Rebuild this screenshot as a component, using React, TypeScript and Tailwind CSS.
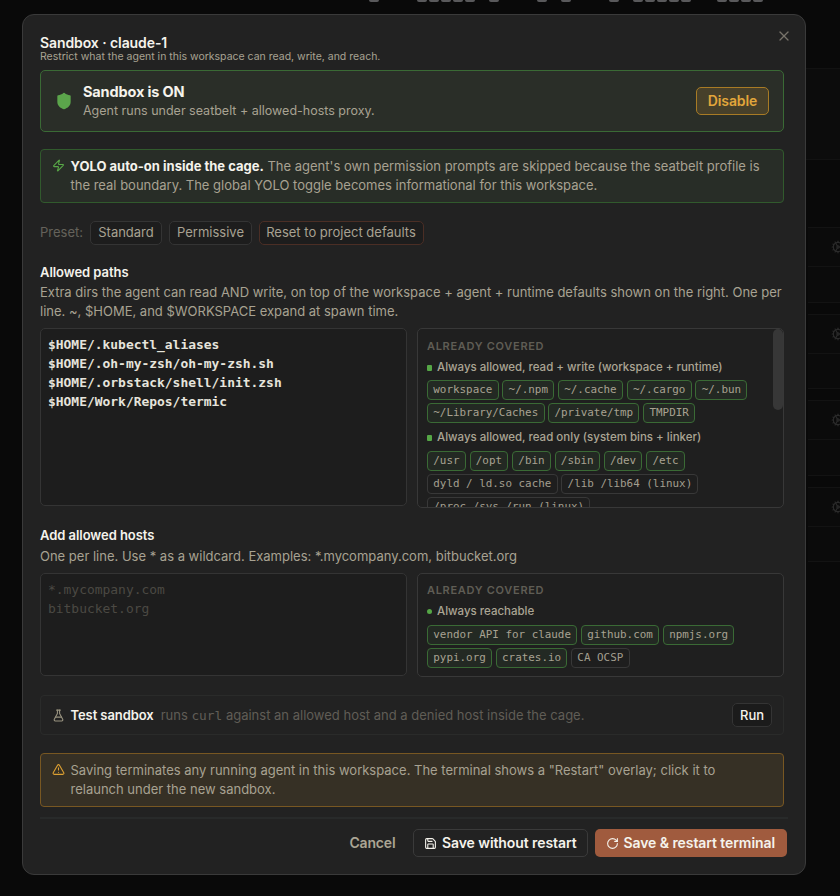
import React from 'react';
import { Cog, FlaskConical, RotateCw, Save, Shield, TriangleAlert, X, Zap } from 'lucide-react';

interface ChipData {
  label: string;
  muted?: boolean;
}

interface ChipGroupProps {
  title: string;
  chips: ChipData[];
  square?: boolean;
}

const WRITE_PATHS: ChipData[] = [
  { label: 'workspace' },
  { label: '~/.npm' },
  { label: '~/.cache' },
  { label: '~/.cargo' },
  { label: '~/.bun' },
  { label: '~/Library/Caches' },
  { label: '/private/tmp' },
  { label: 'TMPDIR' },
];

const READ_PATHS: ChipData[] = [
  { label: '/usr' },
  { label: '/opt' },
  { label: '/bin' },
  { label: '/sbin' },
  { label: '/dev' },
  { label: '/etc' },
  { label: 'dyld / ld.so cache', muted: true },
  { label: '/lib /lib64 (linux)', muted: true },
  { label: '/proc /sys /run (linux)', muted: true },
];

const HOSTS: ChipData[] = [
  { label: 'vendor API for claude' },
  { label: 'github.com' },
  { label: 'npmjs.org' },
  { label: 'pypi.org' },
  { label: 'crates.io' },
  { label: 'CA OCSP', muted: true },
];

const PATHS = `$HOME/.kubectl_aliases
$HOME/.oh-my-zsh/oh-my-zsh.sh
$HOME/.orbstack/shell/init.zsh
$HOME/Work/Repos/termic`;

// Columns of the terminal banner that peek out above the dialog
const BANNER = [0, 4, 5, 6, 7, 8, 10, 14, 16, 20, 22, 23, 24, 25, 26, 29, 30, 31, 32];

const Chip: React.FC<ChipData> = ({ label, muted }) => (
  <span
    className={
      muted
        ? 'h-5 px-[5.3px] rounded-[4px] border border-[#383838] bg-[#1e1e1e] text-[#a39e8f] whitespace-pre'
        : 'h-5 px-[5.3px] rounded-[4px] border border-[#3a6a35] bg-[#232923] text-[#a8a292] whitespace-pre'
    }
  >
    {label}
  </span>
);

const ChipGroup: React.FC<ChipGroupProps> = ({ title, chips, square }) => (
  <div>
    <div className="flex items-center gap-[5px] h-4 text-[11.5px] font-medium text-[#aba594]">
      <span className={square ? 'mt-px h-1.5 w-[5px] rounded-[1px] bg-[#55a646]' : 'size-[5px] rounded-full bg-[#55a646]'} />
      {title}
    </div>
    <div className="mt-[5px] flex flex-wrap gap-x-[3.7px] gap-y-[3.2px] font-['DejaVu_Sans_Mono',monospace] text-[10.9px] leading-[18px]">
      {chips.map((chip) => (
        <Chip key={chip.label} {...chip} />
      ))}
    </div>
  </div>
);

const CoveredTitle = () => (
  <div className="h-[14px] text-[11px] leading-[14px] font-semibold tracking-[0.7px] text-[#5f5d55]">ALREADY COVERED</div>
);

const Backdrop = () => (
  <div className="absolute inset-0 overflow-hidden bg-[#090909]">
    <div className="absolute left-[369px] top-0 h-0.5 w-[400px]">
      {BANNER.map((col) => (
        <span key={col} className="absolute top-0 h-0.5 w-2.5 rounded-b-sm bg-[#59595b]" style={{ left: col * 12 }} />
      ))}
    </div>
    <div className="absolute left-[806px] right-0 top-[68px] h-[92px] border-y border-[#121212] bg-[#0c0c0c]" />
    <div className="absolute left-[808px] right-0 top-[227px] flex flex-col gap-[11px]">
      {[0, 1, 2, 3].map((row) => (
        <div key={row} className="h-[75.5px] border-y border-[#131313] bg-[#0b0b0b]">
          <div className="flex h-[39px] items-center border-b border-[#131313] pl-[23px] text-[#2b2b2b]">
            <Cog size={14} className="shrink-0" />
          </div>
        </div>
      ))}
    </div>
  </div>
);

const App: React.FC = () => {
  return (
    <div className="relative h-[896px] w-[840px] overflow-hidden pl-[22px] pt-[14px] font-['Inter',sans-serif] text-[13px] leading-[19px] text-[#a8a292]">
      <Backdrop />

      <div className="relative flex h-[861px] w-[784px] flex-col rounded-xl border border-[#3a3a3a] bg-[#222222] px-[17px] pt-[20px]">
        <button className="absolute right-[13px] top-[13px] text-[#77736a]" title="Close">
          <X size={16} strokeWidth={1.9} />
        </button>

        <h2 className="h-4 text-[14px] leading-4 font-semibold tracking-[-0.09px] text-[#f5f3ec]">Sandbox · claude-1</h2>
        <p className="h-[12px] text-[10.5px] leading-[11px]">Restrict what the agent in this workspace can read, write, and reach.</p>

        <div className="mt-[7px] flex w-[744px] flex-col">
          <div className="flex h-[62px] items-center rounded-[5px] border border-[#3a6a35] bg-[#2a2e28] pl-[13px] pr-[14px]">
            <Shield size={20} className="fill-[#5ba54b] text-[#5ba54b]" strokeWidth={0} />
            <div className="ml-[9px] flex-1">
              <div className="text-[14.5px] leading-[19px] font-bold tracking-[-0.15px] text-[#f5f3ec]">Sandbox is ON</div>
              <div className="text-[12.5px]">Agent runs under seatbelt + allowed-hosts proxy.</div>
            </div>
            <button className="h-7 w-[73px] rounded-[5px] border border-[#a87b25] bg-[#47402a] pb-[2px] text-[14px] font-semibold tracking-[-0.12px] text-[#e2a63b]">
              Disable
            </button>
          </div>

          <div className="mt-[17px] flex h-[54px] gap-[6px] rounded-[4px] border border-[#315a2d] bg-[#282d27] pl-[10.5px] pt-[7px]">
            <Zap size={13} className="mt-[2px] shrink-0 text-[#58a847]" />
            <p>
              <strong className="font-bold text-[#f5f3ec]">YOLO auto-on inside the cage.</strong> The agent's own permission prompts are skipped because the seatbelt profile is
              <br />
              the real boundary. The global YOLO toggle becomes informational for this workspace.
            </p>
          </div>

          <div className="mt-[18px] flex h-6 items-center gap-[7px]">
            <span className="pb-[2px] text-[#65625b]">Preset:</span>
            <button className="h-6 w-[72px] rounded-[5px] border border-[#343434] bg-[#1d1d1d] pb-[2px]">Standard</button>
            <button className="h-6 w-[83px] rounded-[5px] border border-[#343434] bg-[#1d1d1d] pb-[2px]">Permissive</button>
            <button className="h-6 w-[165px] rounded-[5px] border border-[#4b2e25] bg-[#1d1d1d] pb-[2px] pr-[1px] whitespace-nowrap">
              Reset to project defaults
            </button>
          </div>

          <h3 className="mt-[17px] h-[21px] leading-[20px] font-semibold tracking-[-0.05px] text-[#f5f3ec]">Allowed paths</h3>
          <p className="h-[45px]">
            Extra dirs the agent can read AND write, on top of the workspace + agent + runtime defaults shown on the right. One per
            <br />
            line. ~, $HOME, and $WORKSPACE expand at spawn time.
          </p>
          <div className="grid h-[180px] grid-cols-[367px_367px] items-start gap-[10px]">
            <textarea
              className="h-[178px] resize-none rounded-[5px] border border-[#343434] bg-[#1d1d1d] px-[7px] py-[6px] font-['DejaVu_Sans_Mono',monospace] text-[12.95px] font-bold leading-[19px] text-[#e6e4dc] outline-none"
              defaultValue={PATHS}
            />
            <div className="relative flex h-[180px] flex-col gap-[6.6px] overflow-hidden rounded-[5px] border border-[#383838] bg-[#1f1f1f] px-[9px] pt-[9.5px]">
              <CoveredTitle />
              <ChipGroup title="Always allowed, read + write (workspace + runtime)" chips={WRITE_PATHS} square />
              <ChipGroup title="Always allowed, read only (system bins + linker)" chips={READ_PATHS} square />
              <div className="absolute right-0 top-0 h-[81px] w-[10px] rounded-[5px] bg-[#373737]" />
            </div>
          </div>

          <h3 className="mt-[17px] h-[22px] leading-[20px] font-semibold tracking-[-0.05px] text-[#f5f3ec]">Add allowed hosts</h3>
          <p className="h-[26px]">One per line. Use * as a wildcard. Examples: *.mycompany.com, bitbucket.org</p>
          <div className="grid h-[104px] grid-cols-[367px_367px] items-start gap-[10px]">
            <textarea
              className="h-[103px] resize-none rounded-[5px] border border-[#343434] bg-[#1d1d1d] px-[7px] py-[6px] font-['DejaVu_Sans_Mono',monospace] text-[12.95px] leading-[19px] outline-none placeholder:text-[#4b4943]"
              placeholder={'*.mycompany.com\nbitbucket.org'}
            />
            <div className="flex h-[104px] flex-col gap-[7px] rounded-[5px] border border-[#383838] bg-[#1f1f1f] px-[9px] pt-[8.5px]">
              <CoveredTitle />
              <ChipGroup title="Always reachable" chips={HOSTS} />
            </div>
          </div>

          <div className="mt-[18px] flex h-10 items-center rounded-[4px] border border-[#2a2b2a] pl-[10.5px] pr-[11px]">
            <FlaskConical size={13} className="text-[#98927f]" />
            <span className="ml-[6px] font-semibold tracking-[-0.08px] text-[#f5f3ec]">Test sandbox</span>
            <span className="ml-[7px] flex-1 text-[#605d56]">
              runs <code className="font-['DejaVu_Sans_Mono',monospace] text-[12.8px]">curl</code> against an allowed host and a denied host inside the cage.
            </span>
            <button className="h-6 w-10 rounded-[5px] border border-[#343434] bg-[#1b1b1b] font-medium text-[#f5f3ec]">Run</button>
          </div>

          <div className="mt-[18px] flex h-[54px] gap-[6px] rounded-[4px] border border-[#785722] bg-[#363025] pl-[10.5px] pt-[7px]">
            <TriangleAlert size={13} className="mt-[1.5px] shrink-0 text-[#dda032]" />
            <p>
              Saving terminates any running agent in this workspace. The terminal shows a "Restart" overlay; click it to
              <br />
              relaunch under the new sandbox.
            </p>
          </div>
        </div>

        <div className="mt-[10px] flex w-[748px] items-center justify-end border-t-2 border-[#282a2a] pr-px pt-[10px] text-[14px] font-semibold tracking-[-0.08px] text-[#f5f3ec]">
          <button className="mr-[17.5px] pb-[2px] text-[#aba594] tracking-[-0.15px]">Cancel</button>
          <button className="mr-[7px] flex h-7 w-[175px] items-center justify-center gap-[4.5px] rounded-[5px] border border-[#3a3a3a]">
            <Save size={13} />
            <span className="pb-[2px]">Save without restart</span>
          </button>
          <button className="flex h-7 w-[192px] items-center justify-center gap-[4.5px] rounded-[5px] bg-[#a05b3e] pr-px">
            <RotateCw size={13} />
            <span className="pb-[2px]">Save & restart terminal</span>
          </button>
        </div>
      </div>
    </div>
  );
};

export default App;
